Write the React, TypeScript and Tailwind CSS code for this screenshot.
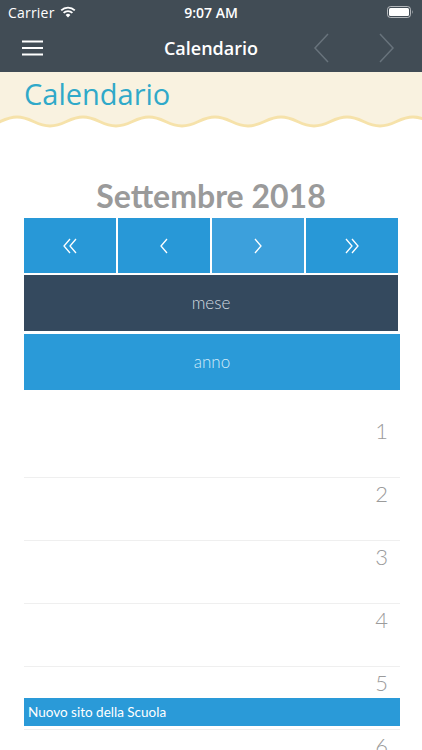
import React from "react";

const wavePath = () => {
  let d = "M -16 12";
  let x = -16;
  let up = true;
  while (x < 440) {
    const nx = x + 33;
    const y = up ? 3 : 12;
    const py = up ? 12 : 3;
    d += ` C ${x + 14} ${py} ${nx - 14} ${y} ${nx} ${y}`;
    x = nx;
    up = !up;
  }
  return d;
};

const StatusBar = () => (
  <div className="h-[24px] flex items-center justify-between px-[8px] text-white text-[14px]">
    <div className="flex items-center gap-[5px] w-[120px]">
      <span className="font-['Open_Sans',sans-serif] tracking-[0.2px]">Carrier</span>
      <svg width="16" height="12" viewBox="0 0 16 12">
        <path d="M8 11.5 L5.6 8.9 A3.4 3.4 0 0 1 10.4 8.9 Z" fill="white" />
        <path d="M3.6 6.9 A6.2 6.2 0 0 1 12.4 6.9" stroke="white" strokeWidth="1.8" fill="none" />
        <path d="M1.2 4.4 A9.6 9.6 0 0 1 14.8 4.4" stroke="white" strokeWidth="1.8" fill="none" />
      </svg>
    </div>
    <span className="font-['Open_Sans',sans-serif] font-semibold text-[14px]">9:07 AM</span>
    <div className="w-[120px] flex justify-end">
      <svg width="27" height="12" viewBox="0 0 27 12">
        <rect x="0.5" y="0.5" width="23" height="11" rx="3" stroke="white" strokeOpacity="0.6" fill="none" />
        <rect x="2" y="2" width="20" height="8" rx="1.5" fill="white" />
        <path d="M25 4 Q26.5 6 25 8 Z" fill="white" fillOpacity="0.6" />
      </svg>
    </div>
  </div>
);

const NavBar = () => (
  <div className="h-[48px] flex items-center px-[22px] text-white">
    <div className="w-[100px] flex items-center">
      <svg width="22" height="16" viewBox="0 0 22 16">
        <path d="M0 1.5 H21 M0 8 H21 M0 14.5 H21" stroke="white" strokeWidth="2" />
      </svg>
    </div>
    <span className="flex-1 text-center font-['Open_Sans',sans-serif] font-semibold text-[18px]">Calendario</span>
    <div className="w-[100px] flex items-center justify-end gap-[48px] pr-[5px]">
      <svg width="17" height="30" viewBox="0 0 17 30">
        <path d="M15 1 L2 15 L15 29" stroke="#68737c" strokeWidth="1.5" fill="none" />
      </svg>
      <svg width="17" height="30" viewBox="0 0 17 30">
        <path d="M2 1 L15 15 L2 29" stroke="#68737c" strokeWidth="1.5" fill="none" />
      </svg>
    </div>
  </div>
);

const Chevron = ({ dir, double }: { dir: "l" | "r"; double?: boolean }) => {
  if (double) {
    const d =
      dir === "l"
        ? "M7 1 L1 8 L7 15 M13 1 L7 8 L13 15"
        : "M1 1 L7 8 L1 15 M7 1 L13 8 L7 15";
    return (
      <svg width="14" height="16" viewBox="0 0 14 16">
        <path d={d} stroke="white" strokeWidth="1.3" fill="none" />
      </svg>
    );
  }
  return (
    <svg width="8" height="16" viewBox="0 0 8 16">
      <path d={dir === "l" ? "M7 1 L1 8 L7 15" : "M1 1 L7 8 L1 15"} stroke="white" strokeWidth="1.3" fill="none" />
    </svg>
  );
};

const DayRow = ({ n, event }: { n: number; event?: string }) => (
  <div className="h-[63px] border-b border-[#efefef] pt-[4px]">
    <div className="text-right pr-[12px] text-[22px] leading-[24px] font-light text-[#9b9b9b]">{n}</div>
    {event && (
      <div className="mt-[3px] h-[28px] bg-[#2a9ad8] text-white text-[13.5px] leading-[28px] pl-[4px]">
        {event}
      </div>
    )}
  </div>
);

export default function App() {
  return (
    <div className="w-[422px] h-[750px] overflow-hidden bg-white font-['Lato',sans-serif]">
      <div className="bg-[#414c55]">
        <StatusBar />
        <NavBar />
      </div>
      <div className="bg-[#f9f2e0] h-[42px] px-[24px] pt-[4px]">
        <span className="font-['Open_Sans',sans-serif] text-[29px] leading-[36px] text-[#30a9c9]">Calendario</span>
      </div>
      <svg width="422" height="16" viewBox="0 0 422 16" className="block">
        <path d={wavePath() + " L 440 0 L -16 0 Z"} fill="#f9f2e0" />
        <path d={wavePath()} stroke="#f6e2aa" strokeWidth="3" fill="none" />
      </svg>
      <div className="px-[24px]">
        <h2 className="mt-[46px] text-center text-[32px] leading-[40px] font-bold text-[#9a9a9a]">Settembre 2018</h2>
        <div className="mt-[2px] w-[374px] flex gap-[2px]">
          <div className="flex-1 h-[55px] bg-[#2898d7] flex items-center justify-center">
            <Chevron dir="l" double />
          </div>
          <div className="flex-1 h-[55px] bg-[#2898d7] flex items-center justify-center">
            <Chevron dir="l" />
          </div>
          <div className="flex-1 h-[55px] bg-[#3ca0dc] flex items-center justify-center">
            <Chevron dir="r" />
          </div>
          <div className="flex-1 h-[55px] bg-[#2898d7] flex items-center justify-center">
            <Chevron dir="r" double />
          </div>
        </div>
        <div className="mt-[2px] w-[374px] h-[56px] bg-[#34495e] flex items-center justify-center text-[17px] font-light text-[#d3dae1]">
          mese
        </div>
        <div className="mt-[3px] w-[376px] h-[56px] bg-[#2a9ad8] flex items-center justify-center text-[17px] font-light text-[#d3eaf8]">
          anno
        </div>
        <div className="mt-[25px] w-[376px]">
          {[1, 2, 3, 4].map((n) => (
            <DayRow key={n} n={n} />
          ))}
          <DayRow n={5} event="Nuovo sito della Scuola" />
          <DayRow n={6} />
        </div>
      </div>
    </div>
  );
}
